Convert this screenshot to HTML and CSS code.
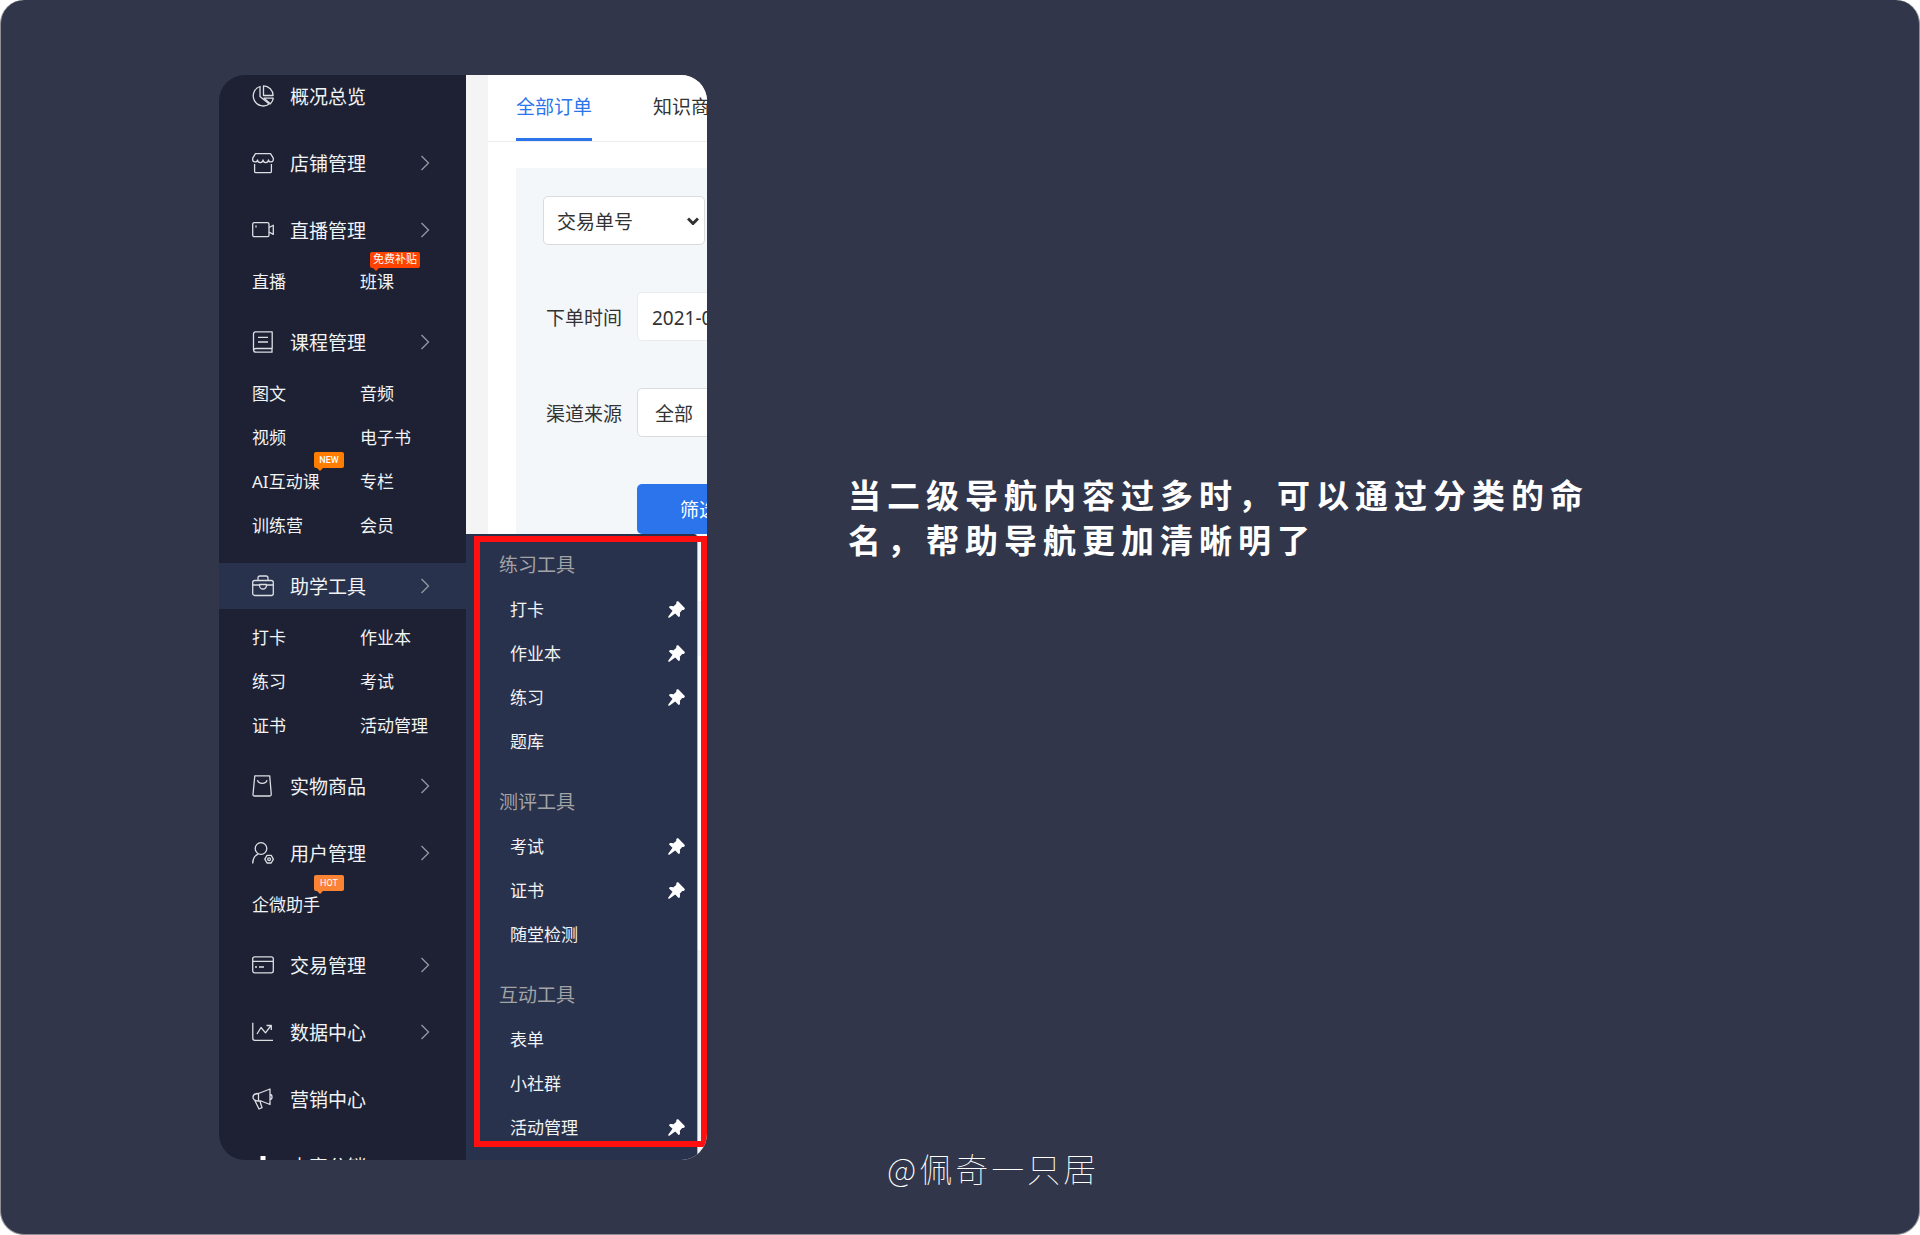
FILE: index.html
```html
<!DOCTYPE html>
<html lang="zh-CN">
<head>
<meta charset="utf-8">
<meta name="viewport" content="width=device-width, initial-scale=1">
<title>二级导航</title>
<link rel="stylesheet" href="styles.css">
</head>
<body>
<svg class="defs" aria-hidden="true">
  <symbol id="chevron" viewBox="0 0 10 16"><path d="M1.500 1l7 7-7 7"/></symbol>
  <symbol id="pin" viewBox="0 0 17 17"><path d="M8.300 1.600C8.500.2 9.800 0 10.700.8l5.600 5.600c.9 1 .6 2.300-.8 2.500l-1.300.1-2.400 2.700c.4 1.500.3 2.900-.2 3.900-.3.500-.8.5-1.200.1L7.200 12.500 1 17l-1-1 4.500-6.200L1.300 6.700c-.4-.4-.3-.9.2-1.200 1-.5 2.300-.5 3.700-.1L8.200 3z"/></symbol>
</svg>
<main class="stage">
  <div class="shot">
    <nav class="sidebar" aria-label="主导航">
      <ul class="menu">
        <li><a class="item" href="#"><svg class="icon" viewBox="0 0 22 22"><path d="M8 1.500A10 10 0 1 0 17.200 19L8 11.500z"/><path d="M11.500.8v9.700h9.600A9.700 9.700 0 0 0 11.500.8z"/><path d="M12 13.200h9.300a9 9 0 0 1-2.900 5.500z"/></svg>概况总览</a></li>
        <li><a class="item" href="#"><svg class="icon" viewBox="0 0 22 22"><path d="M3.500 1.700h15l2.800 4.500v1a2.400 2.400 0 0 1-4.800.6 2.600 2.600 0 0 1-5.500 0 2.600 2.600 0 0 1-5.500 0A2.400 2.400 0 0 1 .7 7.200v-1z"/><path d="M2.600 12v7.500q0 1.200 1.200 1.200h14.400q1.200 0 1.200-1.200V12"/></svg>店铺管理<svg class="arrow"><use href="#chevron"/></svg></a></li>
        <li><a class="item" href="#"><svg class="icon" viewBox="0 0 22 22"><rect x=".7" y="3.700" width="16.300" height="14" rx="1.500"/><path d="M17 8.500l4.300-2.300v9.200L17 13"/><path d="M4 6.500v2"/></svg>直播管理<svg class="arrow"><use href="#chevron"/></svg></a>
          <ul class="sub"><li><a href="#">直播</a></li><li><a href="#">班课<span class="badge badge-free">免费补贴</span></a></li></ul></li>
        <li><a class="item" href="#"><svg class="icon" viewBox="0 0 22 22"><path d="M20.200 17.500V.8H3.500Q1.500.8 1.500 3v15.500q0 2.700 2.500 2.700h16v-3.700H4q-2.500 0-2.500 1.800M6 6.300h10M6 11h10"/></svg>课程管理<svg class="arrow"><use href="#chevron"/></svg></a>
          <ul class="sub"><li><a href="#">图文</a></li><li><a href="#">音频</a></li><li><a href="#">视频</a></li><li><a href="#">电子书</a></li><li><a href="#">AI互动课<span class="badge badge-new">NEW</span></a></li><li><a href="#">专栏</a></li><li><a href="#">训练营</a></li><li><a href="#">会员</a></li></ul></li>
        <li><a class="item active" href="#" aria-current="page"><svg class="icon" viewBox="0 0 22 22"><rect x=".7" y="5.500" width="20.600" height="15" rx="2"/><path d="M6 5.500V3q0-2 2-2h6q2 0 2 2v2.500M1 10h6.500M14.500 10H21M7.500 9.500v1a3.500 3.500 0 0 0 7 0v-1z"/></svg>助学工具<svg class="arrow"><use href="#chevron"/></svg></a>
          <ul class="sub"><li><a href="#">打卡</a></li><li><a href="#">作业本</a></li><li><a href="#">练习</a></li><li><a href="#">考试</a></li><li><a href="#">证书</a></li><li><a href="#">活动管理</a></li></ul></li>
        <li><a class="item" href="#"><svg class="icon" viewBox="0 0 22 22"><path d="M2.800.8h14.900l1.600 18.700q0 1.500-1.500 1.500H2.500Q1 21 1 19.500zM5.500 5.200c1 4.300 8.500 4.300 9.500 0"/></svg>实物商品<svg class="arrow"><use href="#chevron"/></svg></a></li>
        <li><a class="item" href="#"><svg class="icon" viewBox="0 0 22 22"><circle cx="9" cy="6.500" r="5.800"/><path d="M.7 21.500c0-4.500 2-8 5.500-9.700"/><path d="M12.800 17.200l2.200-3.800h4.200l2.200 3.800-2.200 3.800H15z"/><circle cx="17.100" cy="17.200" r="1.400"/></svg>用户管理<svg class="arrow"><use href="#chevron"/></svg></a>
          <ul class="sub"><li><a href="#">企微助手<span class="badge badge-hot">HOT</span></a></li></ul></li>
        <li><a class="item" href="#"><svg class="icon" viewBox="0 0 22 22"><rect x=".7" y="2.800" width="20.600" height="16" rx="2"/><path d="M1 7.300h20M3 13h2M7 13h5"/></svg>交易管理<svg class="arrow"><use href="#chevron"/></svg></a></li>
        <li><a class="item" href="#"><svg class="icon" viewBox="0 0 22 22"><path d="M.8 1.800v15.500q0 2 2 2H21M5 13l4-6.500 4.500 5.300L19 4.500M14.500 4.500H19.300V9"/></svg>数据中心<svg class="arrow"><use href="#chevron"/></svg></a></li>
        <li><a class="item" href="#"><svg class="icon" viewBox="0 0 22 22"><path d="M6.500 5.500L18 1v15.500L9 13H6C-.8 13-.8 5.500 6.500 5.500zM6.500 5.500V13M18 6.500q2 0 2 2.500t-2 2.500M3 12.800l4 8.200 3-1.300-2-6.500"/></svg>营销中心</a></li>
        <li><a class="item" href="#"><svg class="icon" viewBox="0 0 22 22"><path class="solid" d="M8.500 1h5v20h-5zM1 8h5v13H1zM16 12h5v9h-5z"/></svg>内容分销</a></li>
      </ul>
    </nav>

    <div class="content">
      <section class="orders">
        <div class="tabs"><a class="tab current" href="#">全部订单</a><a class="tab" href="#">知识商</a></div>
        <form class="filters">
          <div class="select-box">
            <select aria-label="搜索类型"><option>交易单号</option></select>
            <svg class="caret" viewBox="0 0 12 8"><path d="M1 1.500l5 5 5-5"/></svg>
          </div>
          <div class="field"><label for="time">下单时间</label><input id="time" class="control date" type="text" value="2021-0"></div>
          <div class="field"><label for="source">渠道来源</label><select id="source" class="control"><option>全部</option></select></div>
          <button class="submit" type="button">筛选</button>
        </form>
        <div class="table-head"></div>
        <div class="table-body"></div>
      </section>

      <nav class="flyout" aria-label="助学工具">
        <section>
          <h2>练习工具</h2>
          <ul>
            <li><a href="#">打卡</a><svg class="pin"><use href="#pin"/></svg></li>
            <li><a href="#">作业本</a><svg class="pin"><use href="#pin"/></svg></li>
            <li><a href="#">练习</a><svg class="pin"><use href="#pin"/></svg></li>
            <li><a href="#">题库</a></li>
          </ul>
        </section>
        <section>
          <h2>测评工具</h2>
          <ul>
            <li><a href="#">考试</a><svg class="pin"><use href="#pin"/></svg></li>
            <li><a href="#">证书</a><svg class="pin"><use href="#pin"/></svg></li>
            <li><a href="#">随堂检测</a></li>
          </ul>
        </section>
        <section>
          <h2>互动工具</h2>
          <ul>
            <li><a href="#">表单</a></li>
            <li><a href="#">小社群</a></li>
            <li><a href="#">活动管理</a><svg class="pin"><use href="#pin"/></svg></li>
          </ul>
        </section>
      </nav>
    </div>
    <div class="highlight"></div>
  </div>

  <div class="notes">
    <h1>当二级导航内容过多时，可以通过分类的命名，帮助导航更加清晰明了</h1>
    <p class="credit">@佩奇一只居</p>
  </div>
</main>
</body>
</html>
```
FILE: styles.css
```css
* { box-sizing: border-box; }

body {
  margin: 0;
  background: #fff;
  font-family: "Noto Sans", "Noto Sans CJK SC", sans-serif;
  font-size: 19px;
}

ul { list-style: none; margin: 0; padding: 0; }
a { color: inherit; text-decoration: none; }
h1, h2, p { margin: 0; font-weight: 400; }
.defs { position: absolute; width: 0; height: 0; }

.stage {
  display: flex;
  gap: 141px;
  height: 100vh;
  padding: 75px 0 0 218px;
  border: 1px solid #8e8f94;
  border-top-width: 0;
  border-radius: 24px;
  background: #31364a;
}

/* Product screenshot */
.shot {
  position: relative;
  display: flex;
  flex: none;
  width: 488px;
  height: calc(100vh - 150px);
  border-radius: 26px;
  overflow: hidden;
}

.sidebar {
  width: 247px;
  background: #1d2133;
  color: #f2f3f5;
}

.menu {
  display: flex;
  flex-direction: column;
  gap: 21px;
  margin-top: -2px;
}

.item {
  display: flex;
  align-items: center;
  height: 46px;
  padding: 0 36px 0 33px;
}
.item.active { background: #29324c; }

.icon {
  width: 22px;
  height: 22px;
  margin-right: 16px;
  fill: none;
  stroke: #dcdee3;
  stroke-width: 1.3;
  stroke-linejoin: round;
}
.icon .solid { fill: #fff; stroke: none; }

.arrow {
  width: 10px;
  height: 16px;
  margin-left: auto;
  fill: none;
  stroke: #9699a3;
  stroke-width: 1.3;
}

.sub {
  display: grid;
  grid-template-columns: 108px 1fr;
  row-gap: 11px;
  padding: 12px 0 0 33px;
  font-size: 17px;
  line-height: 33px;
}
.sub a { position: relative; display: inline-block; }

.badge {
  position: absolute;
  top: -13px;
  left: 62px;
  width: 30px;
  height: 16px;
  border-radius: 2px;
  color: #fff;
  font: 500 9px/16px Roboto, "Noto Sans CJK SC", sans-serif;
  text-align: center;
}
.badge::after {
  content: "";
  position: absolute;
  top: 100%;
  left: 3px;
  border: 3px solid transparent;
  border-top-color: inherit;
  border-bottom-width: 0;
}
.badge-free { left: 10px; width: 50px; background: #ff4200; border-color: #ff4200; font-size: 11px; font-weight: 400; }
.badge-new { background: #ff7d00; border-color: #ff7d00; }
.badge-hot { background: #fa8334; border-color: #fa8334; font-weight: 400; }

/* Orders page */
.content {
  position: relative;
  flex: 1;
  min-width: 0;
  padding-left: 22px;
  background: #f4f4f4;
  color: #333;
}
.orders { background: #fff; }

.tabs {
  display: flex;
  gap: 61px;
  height: 67px;
  padding-left: 28px;
  border-bottom: 1px solid #ececee;
  white-space: nowrap;
  line-height: 64px;
}
.tab.current { height: 66px; color: #2b74ec; border-bottom: 3px solid #2b74ec; }

.filters {
  display: flex;
  flex-direction: column;
  gap: 47px;
  margin: 26px 0 0 28px;
  padding: 28px 0 26px 27px;
  background: #f3f7fa;
}

select, input, button { font: inherit; color: inherit; appearance: none; }
select, input {
  height: 49px;
  border: 1px solid #dadbdd;
  border-radius: 5px;
  background: #fff;
}
.select-box { position: relative; width: 162px; }
.select-box select { width: 100%; padding: 2px 13px 0; }
.caret {
  position: absolute;
  top: 21px;
  right: 6px;
  width: 12px;
  height: 8px;
  fill: none;
  stroke: #333;
  stroke-width: 3;
  pointer-events: none;
}
.field { display: flex; align-items: center; padding-left: 3px; }
.field label { flex: none; width: 91px; }
.control { flex: none; width: 200px; padding: 2px 17px 0; }
.date { padding: 2px 14px 0; border-color: #e9ebed; }
.submit {
  width: 124px;
  height: 50px;
  margin-left: 94px;
  border: 0;
  border-radius: 5px;
  background: #2b74ec;
  color: #fff;
}
.table-head { height: 55px; margin-top: 41px; background: #f3f7fa; }
.table-body { height: 294px; }

/* Second-level menu lying over the orders page */
.flyout {
  position: absolute;
  top: 459px;
  right: 9px;
  bottom: 0;
  left: 0;
  display: flex;
  flex-direction: column;
  gap: 27px;
  padding: 14px 12px 0 33px;
  border-right: 1px solid #aeb1ba;
  border-top-right-radius: 4px;
  background: #29324c;
  color: #f2f3f5;
}
.flyout h2 { margin-bottom: 11px; color: #a3a3a6; font-size: 19px; line-height: 34px; }
.flyout ul { display: flex; flex-direction: column; gap: 11px; padding-left: 11px; }
.flyout li {
  display: flex;
  align-items: center;
  justify-content: space-between;
  font-size: 17px;
  line-height: 33px;
}
.pin { width: 17px; height: 17px; fill: #fff; }

.highlight {
  position: absolute;
  top: 461px;
  right: 0;
  bottom: 13px;
  left: 255px;
  border: 6px solid #ff0f0f;
  pointer-events: none;
}

/* Caption */
.notes {
  display: flex;
  flex: 1;
  flex-direction: column;
  justify-content: space-between;
  padding: 397px 0 43px;
  color: #fff;
}
.notes h1 {
  max-width: 760px;
  font: 700 33px/45px "Noto Sans CJK SC", sans-serif;
  letter-spacing: 6px;
}
.credit {
  padding-left: 39px;
  font: 100 33px/46px "Noto Sans CJK SC", sans-serif;
  letter-spacing: 3px;
}
```
